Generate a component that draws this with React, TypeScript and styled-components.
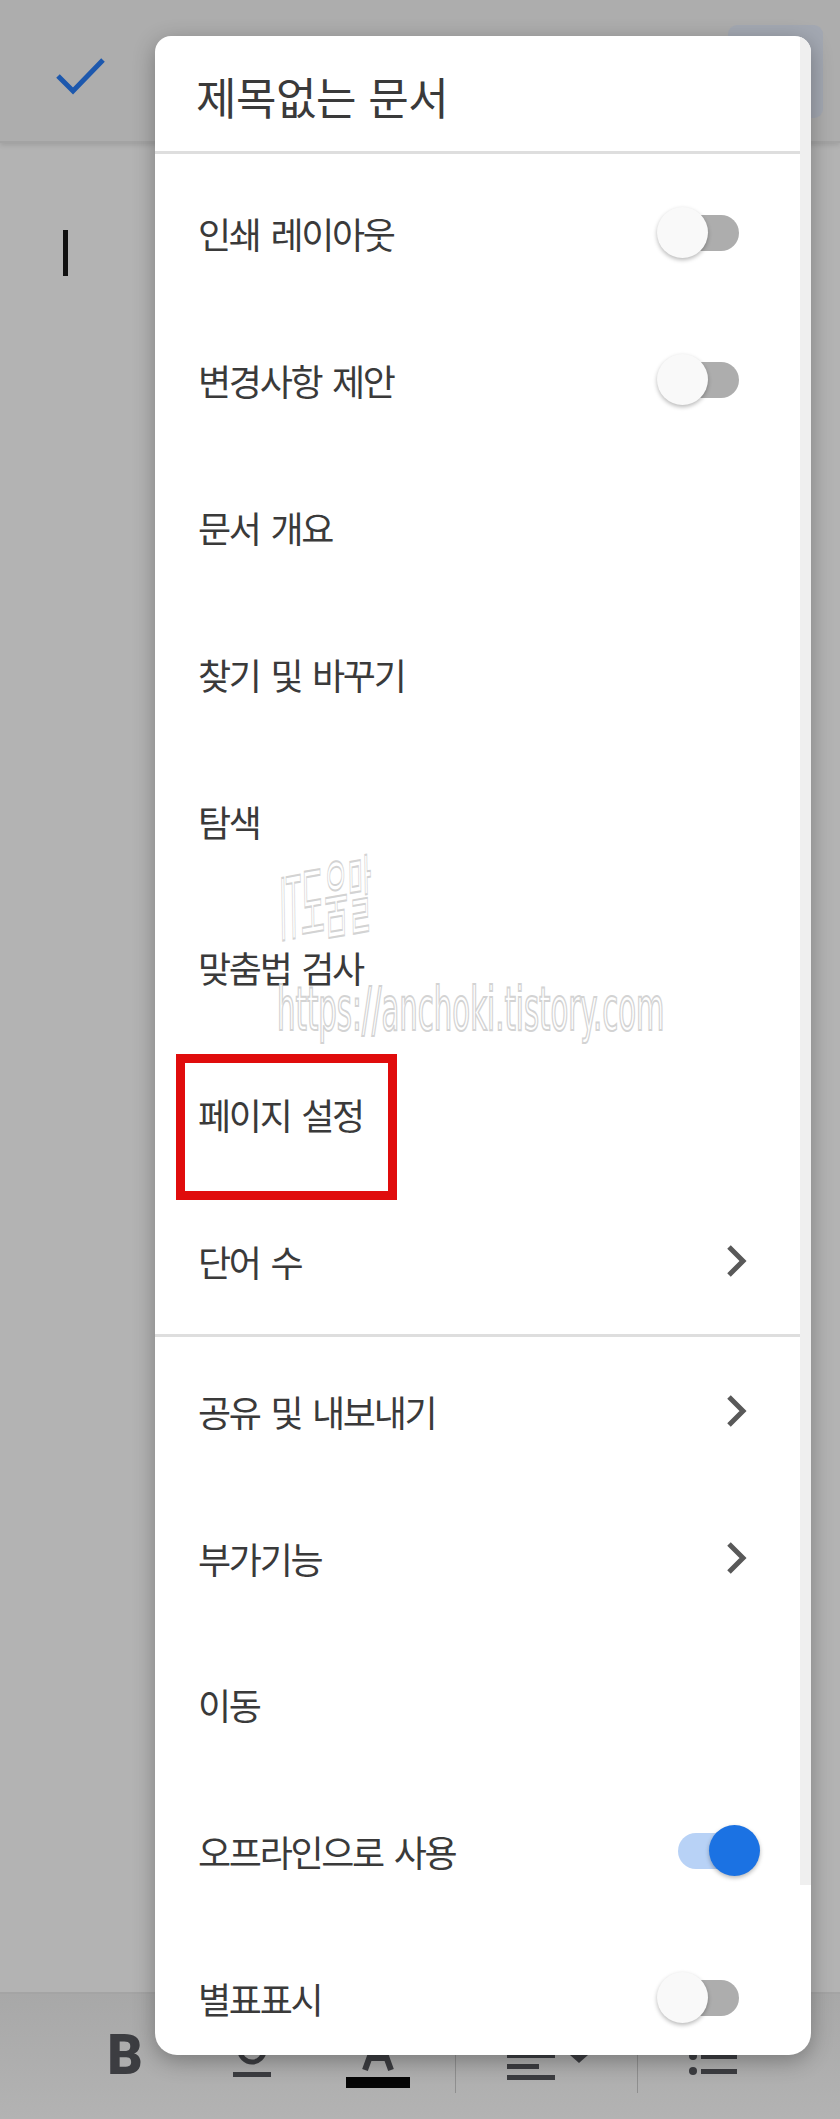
import React from "react";
import styled, { createGlobalStyle } from "styled-components";

type Trail = "off" | "on" | "chevron";

interface MenuItem {
  label: string;
  trail?: Trail;
  highlight?: boolean;
}

const sections: MenuItem[][] = [
  [
    { label: "인쇄 레이아웃", trail: "off" },
    { label: "변경사항 제안", trail: "off" },
    { label: "문서 개요" },
    { label: "찾기 및 바꾸기" },
    { label: "탐색" },
    { label: "맞춤법 검사" },
    { label: "페이지 설정", highlight: true },
    { label: "단어 수", trail: "chevron" },
  ],
  [
    { label: "공유 및 내보내기", trail: "chevron" },
    { label: "부가기능", trail: "chevron" },
    { label: "이동" },
    { label: "오프라인으로 사용", trail: "on" },
    { label: "별표표시", trail: "off" },
  ],
];

const GlobalStyle = createGlobalStyle`
  *, *::before, *::after { box-sizing: border-box; }
  html, body { margin: 0; padding: 0; }
  body {
    background: #b3b3b3;
    font-family: "Noto Sans CJK KR", "Noto Sans", sans-serif;
    overflow: hidden;
  }
`;

const Screen = styled.div`
  position: relative;
  width: 840px;
  height: 2119px;
  display: flex;
  flex-direction: column;
  background: #b3b3b3;
  overflow: hidden;
`;

const TopBar = styled.header`
  height: 143px;
  flex: none;
  display: flex;
  align-items: flex-start;
  justify-content: space-between;
  padding: 25px 17px 0 56px;
  background: #adadad;
  border-bottom: 2px solid #a3a3a3;
  box-shadow: 0 2px 5px rgba(0, 0, 0, 0.12);
`;

const CheckIcon = styled.svg`
  margin-top: 32px;
`;

const DocsButton = styled.div`
  width: 95px;
  height: 93px;
  border-radius: 9px;
  background: #a3a8b2;
`;

const DocBody = styled.main`
  flex: 1;
  padding: 87px 0 0 63px;
`;

const Cursor = styled.div`
  width: 5px;
  height: 46px;
  background: #111;
`;

const Toolbar = styled.footer`
  height: 127px;
  flex: none;
  display: flex;
  align-items: flex-start;
  padding: 34px 0 0 62px;
  border-top: 2px solid #a4a4a4;
  background: linear-gradient(#a8a8a8, #b3b3b3);
`;

const ToolCell = styled.div<{ $w: number }>`
  width: ${(p) => p.$w}px;
  display: flex;
  justify-content: center;
`;

const BoldGlyph = styled.span`
  font-family: Roboto, "Liberation Sans", sans-serif;
  font-weight: 900;
  font-size: 55px;
  line-height: 1;
  color: #3c3d41;
`;

const ToolSep = styled.div`
  width: 1px;
  height: 43px;
  margin: 22px 0 0 14px;
  background: #8f8f8f;
`;

const ToolSepPlain = styled(ToolSep)`
  margin-left: 0;
`;

const Card = styled.section`
  position: absolute;
  left: 155px;
  top: 36px;
  width: 656px;
  height: 2019px;
  background: #fff;
  border-radius: 16px 16px 22px 22px;
  overflow: hidden;
  box-shadow: 0 6px 22px rgba(0, 0, 0, 0.3);
`;

const Header = styled.div`
  height: 118px;
  display: flex;
  align-items: center;
  padding: 4px 0 0 41px;
  border-bottom: 3px solid #dedede;
`;

const Title = styled.h1`
  margin: 0;
  font-size: 44px;
  font-weight: 400;
  line-height: 1;
  letter-spacing: -0.5px;
  word-spacing: 3px;
  color: #3a3a3a;
`;

const List = styled.ul<{ $first?: boolean }>`
  list-style: none;
  margin: 0;
  padding: ${(p) => (p.$first ? "6px 0 0" : "0")};
  border-top: ${(p) => (p.$first ? "none" : "3px solid #dedede")};
`;

const Row = styled.li`
  position: relative;
  height: 146.8px;
  display: flex;
  align-items: center;
  justify-content: space-between;
  padding: 0 51px 0 43px;
`;

const Label = styled.span`
  font-size: 36px;
  line-height: 1;
  letter-spacing: -2.3px;
  word-spacing: 5px;
  color: #3a3a3a;
`;

const Trailing = styled.div`
  width: 103px;
  height: 52px;
  display: flex;
  align-items: center;
  justify-content: flex-end;
`;

const Chevron = styled.svg`
  margin-right: 12px;
`;

const SwitchBox = styled.div`
  position: relative;
  width: 103px;
  height: 52px;
`;

const Track = styled.div<{ $on: boolean }>`
  position: absolute;
  left: 21px;
  top: 8px;
  width: 61px;
  height: 36px;
  border-radius: 18px;
  background: ${(p) => (p.$on ? "#b8d2f6" : "#adadad")};
`;

const Thumb = styled.div<{ $on: boolean }>`
  position: absolute;
  top: 0;
  left: ${(p) => (p.$on ? "52px" : "0")};
  width: 51px;
  height: 51px;
  border-radius: 50%;
  background: ${(p) => (p.$on ? "#1b72e3" : "#f9f9f9")};
  box-shadow: 0 2px 4px rgba(0, 0, 0, 0.28);
`;

const Highlight = styled.div`
  position: absolute;
  left: 21px;
  top: 13px;
  width: 221px;
  height: 146px;
  border: 9px solid #e00c0c;
  z-index: 3;
  pointer-events: none;
`;

const Scrollbar = styled.div`
  position: absolute;
  right: 0;
  top: 0;
  width: 11px;
  height: 1849px;
  background: #efefef;
`;

const Watermark = styled.span<{ $size: number; $scale: number; $rot: number }>`
  position: absolute;
  z-index: 2;
  white-space: nowrap;
  font-family: "DejaVu Sans Condensed", "Noto Sans CJK KR", sans-serif;
  font-size: ${(p) => p.$size}px;
  line-height: 1;
  color: #fff;
  -webkit-text-stroke: 2px #d3d3d3;
  transform-origin: left top;
  transform: scaleX(${(p) => p.$scale}) rotate(${(p) => p.$rot}deg);
  pointer-events: none;
`;

function Switch({ on }: { on: boolean }) {
  return (
    <SwitchBox>
      <Track $on={on} />
      <Thumb $on={on} />
    </SwitchBox>
  );
}

function TrailFor({ trail }: { trail?: Trail }) {
  if (!trail) return null;
  return (
    <Trailing>
      {trail === "chevron" ? (
        <Chevron width="22" height="32" viewBox="0 0 22 32">
          <polyline points="3,2 17,16 3,30" fill="none" stroke="#595959" strokeWidth="5" />
        </Chevron>
      ) : (
        <Switch on={trail === "on"} />
      )}
    </Trailing>
  );
}

export default function App() {
  return (
    <>
      <GlobalStyle />
      <Screen>
        <TopBar>
          <CheckIcon width="50" height="38" viewBox="0 0 50 38">
            <polyline points="2,19 17,34 47,3" fill="none" stroke="#1d58ad" strokeWidth="5" />
          </CheckIcon>
          <DocsButton />
        </TopBar>
        <DocBody>
          <Cursor />
        </DocBody>
        <Toolbar>
          <ToolCell $w={126}>
            <BoldGlyph>B</BoldGlyph>
          </ToolCell>
          <ToolCell $w={127}>
            <svg width="40" height="50" viewBox="0 0 40 50">
              <path d="M8 2 v20 a12 12 0 0 0 24 0 v-20" fill="none" stroke="#3c3d41" strokeWidth="5" />
              <rect x="1" y="44" width="38" height="5" fill="#3c3d41" />
            </svg>
          </ToolCell>
          <ToolCell $w={126}>
            <svg width="64" height="60" viewBox="0 0 64 60">
              <path d="M19 42 L32 6 L45 42 M24 30 H40" fill="none" stroke="#3c3d41" strokeWidth="6" />
              <rect x="0" y="49" width="64" height="11" fill="#050505" />
            </svg>
          </ToolCell>
          <ToolSep />
          <ToolCell $w={181}>
            <svg width="84" height="60" viewBox="0 0 84 60">
              <rect x="2" y="25" width="48" height="5" fill="#3c3d41" />
              <rect x="2" y="36" width="32" height="5" fill="#3c3d41" />
              <rect x="2" y="47" width="48" height="5" fill="#3c3d41" />
              <polygon points="65,27 83,27 74,35" fill="#3c3d41" />
            </svg>
          </ToolCell>
          <ToolSepPlain />
          <ToolCell $w={152}>
            <svg width="50" height="60" viewBox="0 0 50 60">
              <circle cx="4" cy="13" r="4" fill="#3c3d41" />
              <circle cx="4" cy="28" r="4" fill="#3c3d41" />
              <circle cx="4" cy="43" r="4" fill="#3c3d41" />
              <rect x="12" y="11" width="36" height="5" fill="#3c3d41" />
              <rect x="12" y="26" width="36" height="5" fill="#3c3d41" />
              <rect x="12" y="41" width="36" height="5" fill="#3c3d41" />
            </svg>
          </ToolCell>
        </Toolbar>

        <Card>
          <Header>
            <Title>제목없는 문서</Title>
          </Header>
          {sections.map((items, si) => (
            <List key={si} $first={si === 0}>
              {items.map((item) => (
                <Row key={item.label}>
                  <Label>{item.label}</Label>
                  <TrailFor trail={item.trail} />
                  {item.highlight && <Highlight />}
                </Row>
              ))}
            </List>
          ))}
          <Watermark $size={86} $scale={0.3} $rot={-3} style={{ left: 124, top: 832 }}>
            IT도움말
          </Watermark>
          <Watermark $size={60} $scale={0.54} $rot={0} style={{ left: 122, top: 943 }}>
            https://anchoki.tistory.com
          </Watermark>
          <Scrollbar />
        </Card>
      </Screen>
    </>
  );
}
